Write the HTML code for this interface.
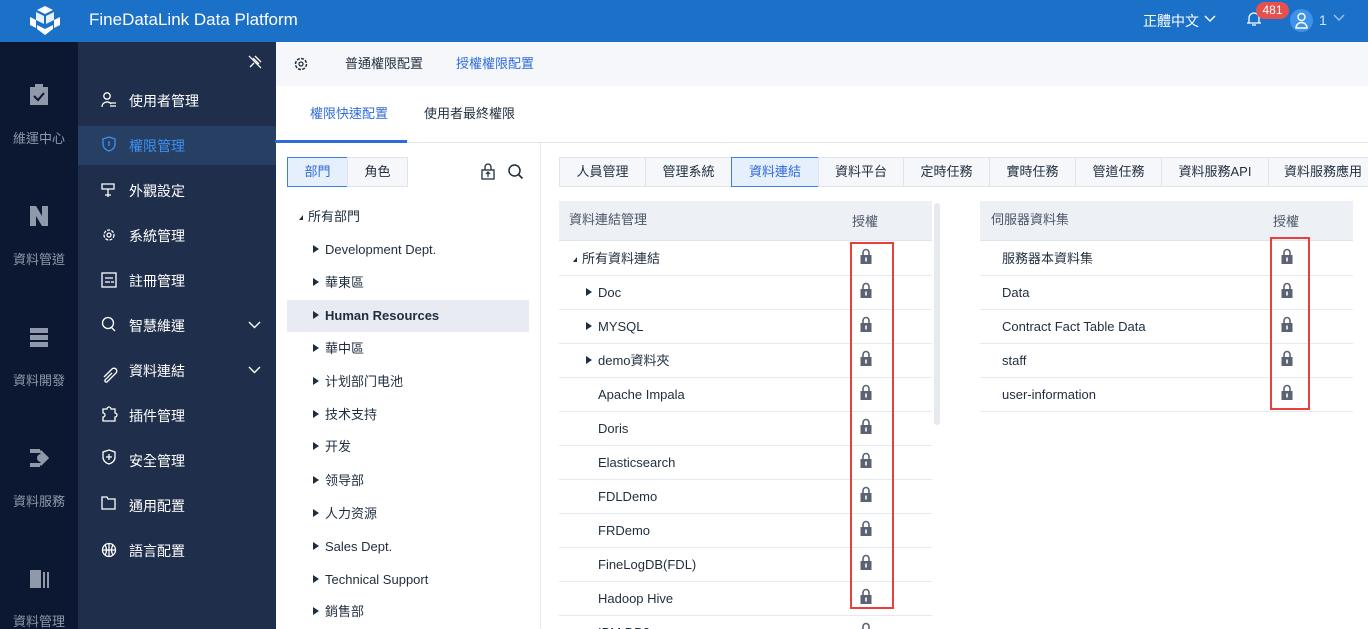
<!DOCTYPE html>
<html><head><meta charset="utf-8"><style>
*{margin:0;padding:0;box-sizing:border-box}
html,body{width:1368px;height:629px;overflow:hidden}
body{position:relative;background:#fff;font-family:"Liberation Sans","Noto Sans CJK TC",sans-serif;font-size:13px;color:#1f2d3d}
.a{position:absolute;white-space:nowrap}
.hdr{left:0;top:0;width:1368px;height:42px;background:#1b70c7}
.rail{left:0;top:42px;width:78px;height:587px;background:#0c1731}
.side{left:78px;top:42px;width:198px;height:587px;background:#1f2e4a}
.ri{width:78px;text-align:center;color:#8f99aa;font-size:13px;line-height:16px}
.si{left:129px;color:#fff;font-size:14px;line-height:18px}
.tr{left:313px;font-size:13px;color:#1f2d3d;height:16px;line-height:16px}
.tri{display:inline-block;width:0;height:0;border-left:6px solid #1f2d3d;border-top:4px solid transparent;border-bottom:4px solid transparent;margin-right:6px;vertical-align:1px}
.tab{top:157px;height:30px;border:1px solid #dfe3ea;background:#f6f7fa;text-align:center;line-height:28px;font-size:13px}
.row{height:34px;border-bottom:1px solid #e6e9ee;line-height:33px;font-size:13px}
</style></head><body>
<div class="a hdr"></div>
<svg class="a" style="left:28px;top:5px" width="34" height="32" viewBox="0 0 34 32"><g fill="#fff"><path d="M17 1l8 4-8 4-8-4z"/><path d="M8 7l8 4v8l-8-4z" opacity=".9"/><path d="M26 7l-8 4v8l8-4z" opacity=".9"/><path d="M2 12l6 3v8l-6-3z"/><path d="M32 12l-6 3v8l6-3z"/><path d="M9 20l8 4 8-4v4l-8 6-8-6z"/></g></svg>
<div class="a" style="left:89px;top:10px;color:#fff;font-size:17px">FineDataLink Data Platform</div>
<div class="a" style="left:1143px;top:12px;color:#fff;font-size:14px;line-height:18px">正體中文</div>
<svg class="a" style="left:1204px;top:15px" width="12" height="8"><path d="M1 1l5 5 5-5" stroke="#fff" fill="none" stroke-width="1.4"/></svg>
<svg class="a" style="left:1246px;top:10px" width="16" height="17"><path d="M3 13V8a5 5 0 0110 0v5H1h14M6 15h4" stroke="#fff" fill="none" stroke-width="1.3"/></svg>
<div class="a" style="left:1256px;top:2px;width:33px;height:17px;background:#e5514f;border-radius:9px;color:#fff;font-size:12px;text-align:center;line-height:17px">481</div>
<div class="a" style="left:1290px;top:9px;width:23px;height:23px;border-radius:50%;background:#3f92eb"></div>
<svg class="a" style="left:1294px;top:12px" width="15" height="17"><circle cx="7.5" cy="5" r="3.5" stroke="#fff" fill="none" stroke-width="1.4"/><path d="M2 16a5.5 5.5 0 0111 0z" stroke="#fff" fill="none" stroke-width="1.4"/></svg>
<div class="a" style="left:1319px;top:12px;color:#cfe2f7;font-size:14px">1</div>
<svg class="a" style="left:1333px;top:14px" width="12" height="8"><path d="M1 1l5 5 5-5" stroke="#9cc3ec" fill="none" stroke-width="1.4"/></svg>

<div class="a rail"></div>
<div class="a side"></div>
<svg class="a" style="left:29px;top:84px" width="20" height="22"><rect x="1" y="3" width="18" height="18" fill="#8f99aa"/><rect x="6" y="0" width="8" height="4" fill="#8f99aa"/><path d="M5 12l4 4 6-7" stroke="#0c1731" fill="none" stroke-width="2"/></svg>
<div class="a ri" style="left:0;top:131px">維運中心</div>
<svg class="a" style="left:29px;top:205px" width="20" height="22"><path d="M1 1h6l6 10V1h6v20h-6L7 11v10H1z" fill="#8f99aa"/></svg>
<div class="a ri" style="left:0;top:252px">資料管道</div>
<svg class="a" style="left:29px;top:327px" width="20" height="20"><rect x="1" y="1" width="18" height="5" fill="#8f99aa"/><rect x="1" y="8" width="18" height="5" fill="#8f99aa"/><rect x="1" y="15" width="18" height="5" fill="#8f99aa"/></svg>
<div class="a ri" style="left:0;top:373px">資料開發</div>
<svg class="a" style="left:29px;top:448px" width="20" height="20"><rect x="1" y="1" width="10" height="4" fill="#8f99aa"/><rect x="1" y="15" width="10" height="4" fill="#8f99aa"/><circle cx="12" cy="10" r="4" fill="#8f99aa"/><path d="M11 3l7 7-7 7" stroke="#8f99aa" stroke-width="3" fill="none"/></svg>
<div class="a ri" style="left:0;top:494px">資料服務</div>
<svg class="a" style="left:29px;top:569px" width="20" height="20"><rect x="1" y="1" width="11" height="18" fill="#8f99aa"/><rect x="14" y="3" width="2" height="16" fill="#8f99aa"/><rect x="18" y="3" width="2" height="16" fill="#8f99aa"/></svg>
<div class="a ri" style="left:0;top:614px">資料管理</div>

<svg class="a" style="left:247px;top:54px" width="16" height="16"><path d="M3 13l4-4M6 4l6 6M8 2l6 6M2 2l12 12" stroke="#fff" fill="none" stroke-width="1.3"/></svg>
<div class="a" style="left:78px;top:126px;width:198px;height:39px;background:#273f63"></div>
<svg class="a" style="left:100px;top:91px" width="18" height="180" fill="none" stroke="#fff" stroke-width="1.3">
<circle cx="7" cy="5" r="3.2"/><path d="M2 16a5 5 0 019-3M10 12h6M10 15h6"/>
<path d="M9 46l6 2v5c0 4-3 6-6 7-3-1-6-3-6-7v-5z" stroke="#3d8fef"/><path d="M9 50v5" stroke="#3d8fef"/>
<path d="M2 93h12v5H2zM8 98v8M5 104h6"/>
<circle cx="9" cy="144" r="5" stroke-dasharray="3 1.3"/><circle cx="9" cy="144" r="2"/>
</svg>
<svg class="a" style="left:100px;top:271px" width="18" height="290" fill="none" stroke="#fff" stroke-width="1.3">
<rect x="2" y="2" width="14" height="14"/><path d="M5 7h8M5 11h5M11 11h3"/>
<circle cx="8" cy="52" r="5.5"/><path d="M11 56l4 4"/>
<path d="M4 106l8-8a2.5 2.5 0 014 4l-9 9a1.5 1.5 0 01-2-2l7-7"/>
<path d="M3 138h4a2 2 0 014 0h4v4a2 2 0 010 4v4H3v-4a2 2 0 000-4z"/>
<path d="M9 179l6 2v5c0 4-3 6-6 7-3-1-6-3-6-7v-5z"/><path d="M9 183v6M6 186h6"/>
<path d="M2 226h5l1 2h7v10H2z"/>
<circle cx="9" cy="279" r="6.5"/><path d="M2.5 279h13M9 272.5v13M5 274c2 3 2 7 0 10M13 274c-2 3-2 7 0 10"/>
</svg>
<div class="a si" style="top:92px">使用者管理</div>
<div class="a si" style="top:137px;color:#3d8fef">權限管理</div>
<div class="a si" style="top:182px">外觀設定</div>
<div class="a si" style="top:227px">系統管理</div>
<div class="a si" style="top:272px">註冊管理</div>
<div class="a si" style="top:317px">智慧維運</div>
<svg class="a" style="left:248px;top:321px" width="13" height="8"><path d="M1 1l5.5 5.5L12 1" stroke="#fff" fill="none" stroke-width="1.4"/></svg>
<div class="a si" style="top:362px">資料連結</div>
<svg class="a" style="left:248px;top:366px" width="13" height="8"><path d="M1 1l5.5 5.5L12 1" stroke="#fff" fill="none" stroke-width="1.4"/></svg>
<div class="a si" style="top:407px">插件管理</div>
<div class="a si" style="top:452px">安全管理</div>
<div class="a si" style="top:497px">通用配置</div>
<div class="a si" style="top:542px">語言配置</div>

<div class="a" style="left:276px;top:42px;width:1092px;height:44px;background:#f6f7fa"></div>
<svg class="a" style="left:293px;top:56px" width="16" height="16"><circle cx="8" cy="8" r="5.5" stroke="#1f2d3d" fill="none" stroke-width="1.5" stroke-dasharray="3 1.3"/><circle cx="8" cy="8" r="2" stroke="#1f2d3d" fill="none" stroke-width="1.3"/></svg>
<div class="a" style="left:345px;top:56px;line-height:16px">普通權限配置</div>
<div class="a" style="left:456px;top:56px;color:#2f6bd8;line-height:16px">授權權限配置</div>
<div class="a" style="left:310px;top:106px;color:#2f6bd8;line-height:16px">權限快速配置</div>
<div class="a" style="left:424px;top:106px;line-height:16px">使用者最終權限</div>
<div class="a" style="left:276px;top:142px;width:1092px;height:1px;background:#e0e4ea"></div>
<div class="a" style="left:275px;top:140px;width:132px;height:3px;background:#2f6bd8"></div>

<div class="a" style="left:287px;top:157px;width:61px;height:30px;border:1px solid #3d7ee0;background:#e6effc;color:#2f6bd8;text-align:center;line-height:28px">部門</div>
<div class="a" style="left:347px;top:157px;width:61px;height:30px;border:1px solid #dfe3ea;background:#f6f7fa;text-align:center;line-height:28px">角色</div>
<svg class="a" style="left:480px;top:163px" width="16" height="17"><path d="M5 7V4a3 3 0 016 0v3" stroke="#1f2d3d" fill="none" stroke-width="1.3"/><rect x="2" y="7" width="12" height="9" stroke="#1f2d3d" fill="none" stroke-width="1.3"/><path d="M8 9v5M6 11l2-2 2 2" stroke="#1f2d3d" fill="none" stroke-width="1.2"/></svg>
<svg class="a" style="left:507px;top:163px" width="17" height="17"><circle cx="7.5" cy="7.5" r="5.5" stroke="#1f2d3d" fill="none" stroke-width="1.5"/><path d="M11.5 11.5l4 4" stroke="#1f2d3d" stroke-width="1.6"/></svg>
<div class="a" style="left:540px;top:143px;width:1px;height:486px;background:#e6e9ee"></div>
<div class="a" style="left:287px;top:300px;width:242px;height:32px;background:#e8ebf1"></div>
<div class="a tr" style="left:299px;top:209px"><span class="tri" style="border-left:4px solid transparent;border-top:0;border-bottom:5px solid #1f2d3d;margin-right:5px"></span>所有部門</div>
<div class="a tr" style="top:242px"><span class="tri"></span>Development Dept.</div>
<div class="a tr" style="top:275px"><span class="tri"></span>華東區</div>
<div class="a tr" style="top:308px;font-weight:bold"><span class="tri"></span>Human Resources</div>
<div class="a tr" style="top:341px"><span class="tri"></span>華中區</div>
<div class="a tr" style="top:374px"><span class="tri"></span>计划部门电池</div>
<div class="a tr" style="top:407px"><span class="tri"></span>技术支持</div>
<div class="a tr" style="top:439px"><span class="tri"></span>开发</div>
<div class="a tr" style="top:473px"><span class="tri"></span>领导部</div>
<div class="a tr" style="top:506px"><span class="tri"></span>人力资源</div>
<div class="a tr" style="top:539px"><span class="tri"></span>Sales Dept.</div>
<div class="a tr" style="top:572px"><span class="tri"></span>Technical Support</div>
<div class="a tr" style="top:604px"><span class="tri"></span>銷售部</div>

<div class="a tab" style="left:559px;width:87px">人員管理</div>
<div class="a tab" style="left:645px;width:87px">管理系統</div>
<div class="a tab" style="left:731px;width:88px;border-color:#3d7ee0;background:#e6effc;color:#2f6bd8">資料連結</div>
<div class="a tab" style="left:818px;width:86px">資料平台</div>
<div class="a tab" style="left:903px;width:87px">定時任務</div>
<div class="a tab" style="left:989px;width:87px">實時任務</div>
<div class="a tab" style="left:1075px;width:87px">管道任務</div>
<div class="a tab" style="left:1161px;width:108px">資料服務API</div>
<div class="a tab" style="left:1268px;width:110px">資料服務應用</div>

<div class="a" style="left:559px;top:201px;width:373px;height:40px;background:#edf0f5;border-bottom:1px solid #dfe3ea"></div>
<div class="a" style="left:569px;top:212px;color:#4a5568;line-height:16px">資料連結管理</div>
<div class="a" style="left:852px;top:214px;color:#4a5568;line-height:16px">授權</div>
<div class="a" style="left:934px;top:203px;width:6px;height:222px;background:#e6e9ee;border-radius:3px"></div>
<div class="a" style="left:980px;top:201px;width:373px;height:40px;background:#edf0f5;border-bottom:1px solid #dfe3ea"></div>
<div class="a" style="left:991px;top:212px;color:#4a5568;line-height:16px">伺服器資料集</div>
<div class="a" style="left:1273px;top:214px;color:#4a5568;line-height:16px">授權</div>

<div class="a" style="left:559px;top:242px;width:373px;height:387px;overflow:hidden">
<div class="row" style="padding-left:14px"><span class="tri" style="border-left:4px solid transparent;border-top:0;border-bottom:5px solid #1f2d3d;margin-right:5px"></span>所有資料連結</div>
<div class="row" style="padding-left:27px"><span class="tri"></span>Doc</div>
<div class="row" style="padding-left:27px"><span class="tri"></span>MYSQL</div>
<div class="row" style="padding-left:27px"><span class="tri"></span>demo資料夾</div>
<div class="row" style="padding-left:39px">Apache Impala</div>
<div class="row" style="padding-left:39px">Doris</div>
<div class="row" style="padding-left:39px">Elasticsearch</div>
<div class="row" style="padding-left:39px">FDLDemo</div>
<div class="row" style="padding-left:39px">FRDemo</div>
<div class="row" style="padding-left:39px">FineLogDB(FDL)</div>
<div class="row" style="padding-left:39px">Hadoop Hive</div>
<div class="row" style="padding-left:39px">IBM DB2</div>
</div>
<div class="a" style="left:980px;top:242px;width:373px">
<div class="row" style="padding-left:22px">服務器本資料集</div>
<div class="row" style="padding-left:22px">Data</div>
<div class="row" style="padding-left:22px">Contract Fact Table Data</div>
<div class="row" style="padding-left:22px">staff</div>
<div class="row" style="padding-left:22px">user-information</div>
</div>

<svg class="a" style="left:859px;top:248px" width="14" height="381">
<defs><g id="l"><path d="M4 7V4.5a3 3 0 016 0V7" stroke="#5b6272" fill="none" stroke-width="1.6"/><rect x="1.5" y="7" width="11" height="9" fill="#5b6272"/><rect x="6.2" y="9.5" width="1.6" height="4" fill="#fff"/></g></defs>
<use href="#l" y="0"/><use href="#l" y="34"/><use href="#l" y="68"/><use href="#l" y="102"/><use href="#l" y="136"/><use href="#l" y="170"/><use href="#l" y="204"/><use href="#l" y="238"/><use href="#l" y="272"/><use href="#l" y="306"/><use href="#l" y="340"/><use href="#l" y="374"/>
</svg>
<svg class="a" style="left:1280px;top:248px" width="14" height="160">
<use href="#l" y="0"/><use href="#l" y="34"/><use href="#l" y="68"/><use href="#l" y="102"/><use href="#l" y="136"/>
</svg>
<div class="a" style="left:850px;top:242px;width:44px;height:367px;border:2px solid #e8403f"></div>
<div class="a" style="left:1270px;top:237px;width:40px;height:173px;border:2px solid #e8403f"></div>
</body></html>
